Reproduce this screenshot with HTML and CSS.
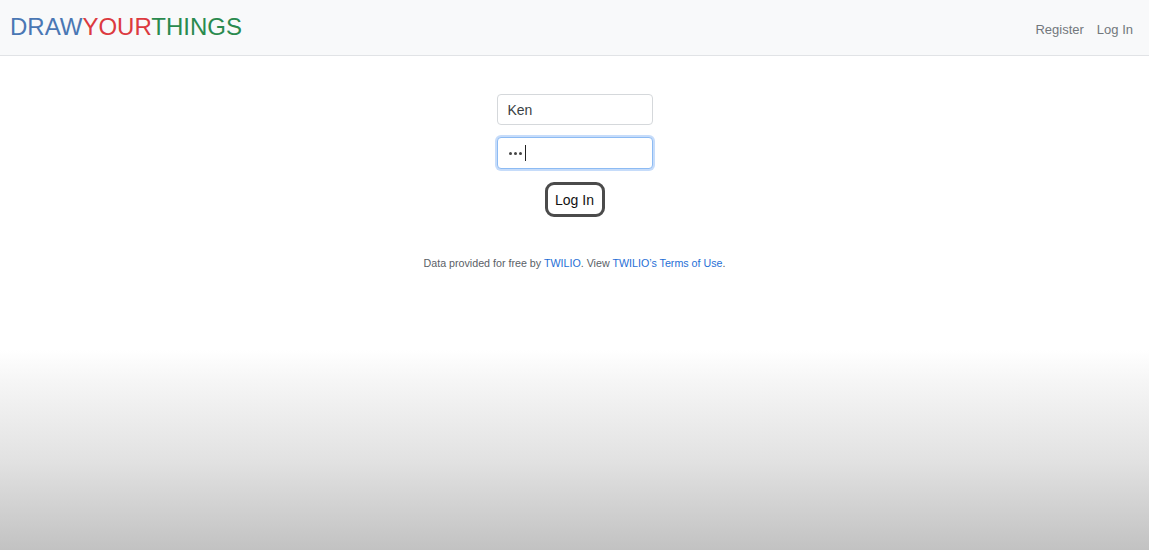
FILE: index.html
```html
<!DOCTYPE html>
<html lang="en">
<head>
<meta charset="utf-8">
<title>DrawYourThings - Log In</title>
<link rel="stylesheet" href="styles.css">
</head>
<body>
<nav class="navbar">
  <a class="brand" href="#"><span class="b-blue">DRAW</span><span class="b-red">YOUR</span><span class="b-green">THINGS</span></a>
  <div class="nav-links">
    <a href="#">Register</a>
    <a href="#">Log In</a>
  </div>
</nav>
<main class="content">
  <form class="login-form">
    <input class="field" type="text" value="Ken">
    <div class="field focused"><span class="dots"><i></i><i></i><i></i></span><span class="caret"></span></div>
    <button class="btn" type="button">Log In</button>
  </form>
  <p class="credit">Data provided for free by <a href="#">TWILIO</a>. View <a href="#">TWILIO’s Terms of Use</a>.</p>
</main>
</body>
</html>
```
FILE: styles.css
```css
html, body {
  margin: 0;
  padding: 0;
}
body {
  min-height: 550px;
  font-family: "Liberation Sans", Arial, sans-serif;
  color: #212529;
  background: linear-gradient(to bottom, #ffffff 0, #ffffff 350px, #f6f6f6 380px, #e2e2e2 460px, #c2c2c2 550px);
}
.navbar {
  height: 56px;
  box-sizing: border-box;
  background: #f8f9fa;
  border-bottom: 1px solid #e1e3e6;
  display: flex;
  align-items: center;
  justify-content: space-between;
  padding: 0 16px 0 10px;
}
.brand {
  text-decoration: none;
  font-size: 24px;
  line-height: 1;
  margin-top: -2px;
}
.b-blue { color: #4a77b4; }
.b-red { color: #dc3a3f; }
.b-green { color: #2a8a4e; }
.nav-links {
  display: flex;
  gap: 13px;
  margin-top: 3px;
}
.nav-links a {
  color: #72777c;
  text-decoration: none;
  font-size: 13px;
}
.content {
  display: flex;
  flex-direction: column;
  align-items: center;
  padding-top: 38px;
}
.login-form {
  display: flex;
  flex-direction: column;
  align-items: center;
}
.field {
  width: 156px;
  height: 31px;
  box-sizing: border-box;
  border: 1px solid #d5d8db;
  border-radius: 4px;
  padding: 0 10px;
  font-family: inherit;
  font-size: 14px;
  color: #3a3f44;
  background: #fff;
  outline: none;
}
.focused {
  margin-top: 12px;
  height: 32px;
  border-color: #8dbbf3;
  box-shadow: 0 0 0 2px #c6dcfa;
  display: flex;
  align-items: center;
}
.dots {
  display: flex;
  gap: 2px;
  margin-left: 1px;
}
.dots i {
  width: 3px;
  height: 3px;
  border-radius: 50%;
  background: #444;
}
.caret {
  display: inline-block;
  width: 1px;
  height: 16px;
  background: #222;
  margin-left: 3px;
}
.btn {
  margin-top: 13px;
  width: 60px;
  height: 35px;
  box-sizing: border-box;
  border: 3px solid #4b4b4b;
  border-radius: 9px;
  background: #fff;
  font-family: inherit;
  font-size: 14px;
  color: #111;
  padding: 0;
}
.credit {
  margin: 40px 0 0;
  font-size: 10.7px;
  color: #5a6066;
}
.credit a {
  color: #1f6fd6;
  text-decoration: none;
}
```
